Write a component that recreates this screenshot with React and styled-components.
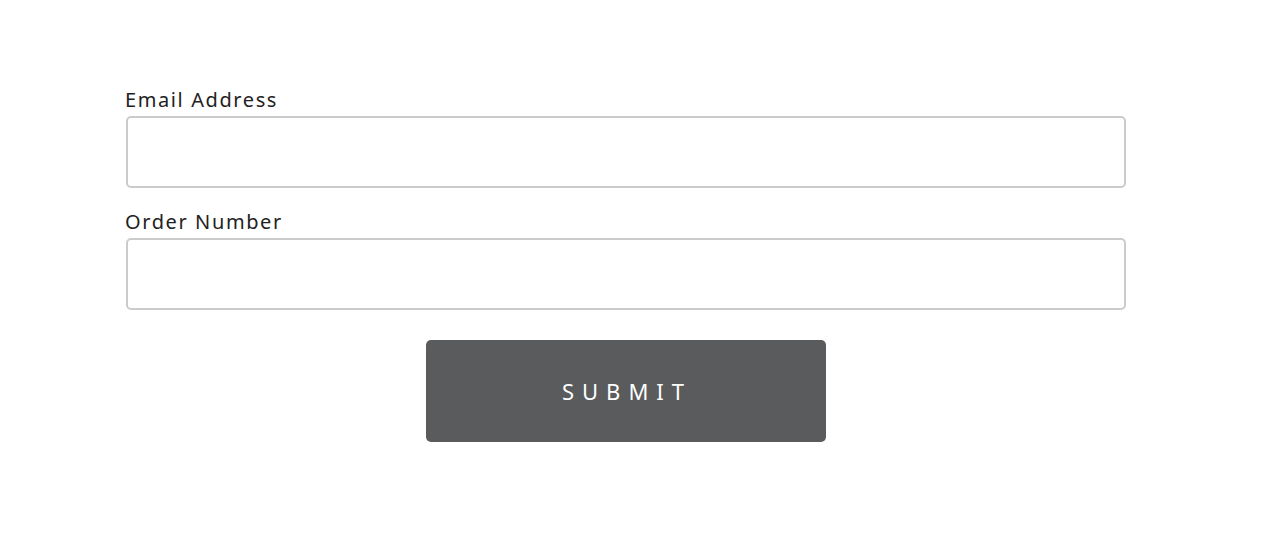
import React from "react";
import styled, { createGlobalStyle } from "styled-components";

const GlobalStyle = createGlobalStyle`
  body {
    margin: 0;
    background: #fff;
    font-family: "Noto Sans", "Open Sans", sans-serif;
  }
`;

const Page = styled.div`
  padding: 88px 0 0 126px;
`;

const Form = styled.form`
  width: 1000px;
  display: flex;
  flex-direction: column;
`;

const Field = styled.div`
  display: flex;
  flex-direction: column;
  margin-bottom: 22px;
`;

const Label = styled.label`
  display: block;
  margin-left: -1px;
  padding-bottom: 4px;
  font-size: 20px;
  line-height: 24px;
  letter-spacing: 1.6px;
  color: #222;
`;

const Input = styled.input`
  box-sizing: border-box;
  width: 100%;
  height: 72px;
  border: 2px solid #cbcbcb;
  border-radius: 5px;
  padding: 0 16px;
  font-size: 18px;
  outline: none;
  background: #fff;
`;

const Submit = styled.button`
  align-self: center;
  margin-top: 8px;
  width: 400px;
  height: 102px;
  border: none;
  border-radius: 5px;
  background: #5a5b5d;
  color: #fff;
  font-family: "Noto Sans", "Open Sans", sans-serif;
  font-size: 22px;
  letter-spacing: 8px;
  padding-left: 8px;
  cursor: pointer;
`;

const App = () => {
  return (
    <Page>
      <GlobalStyle />
      <Form onSubmit={(e) => e.preventDefault()}>
        <Field>
          <Label htmlFor="email">Email Address</Label>
          <Input id="email" type="email" />
        </Field>
        <Field>
          <Label htmlFor="order">Order Number</Label>
          <Input id="order" type="text" />
        </Field>
        <Submit type="submit">SUBMIT</Submit>
      </Form>
    </Page>
  );
};

export default App;
